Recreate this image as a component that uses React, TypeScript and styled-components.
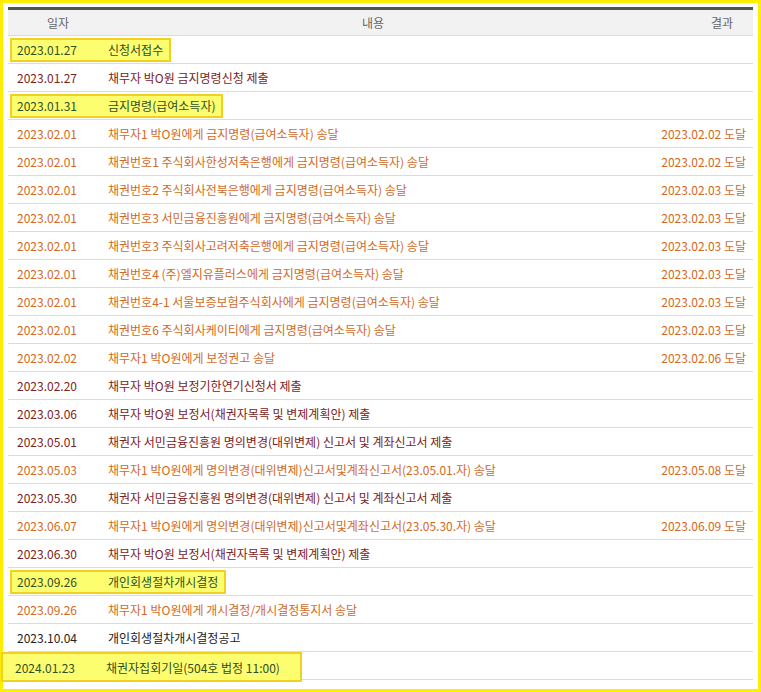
import React from 'react';
import styled, { createGlobalStyle, css } from 'styled-components';

const Global = createGlobalStyle`
  html, body { margin: 0; padding: 0; background: #fff; }
  body { font-family: "Noto Sans CJK KR", "Noto Sans", sans-serif; }
`;

type Tone = 'key' | 'debtor' | 'send' | 'plain';

interface Row {
  date: string;
  text: string;
  result?: string;
  tone: Tone;
  wide?: boolean;
}

const rows: Row[] = [
  { date: '2023.01.27', text: '신청서접수', tone: 'key' },
  { date: '2023.01.27', text: '채무자 박O원 금지명령신청 제출', tone: 'debtor' },
  { date: '2023.01.31', text: '금지명령(급여소득자)', tone: 'key' },
  { date: '2023.02.01', text: '채무자1 박O원에게 금지명령(급여소득자) 송달', result: '2023.02.02 도달', tone: 'send' },
  { date: '2023.02.01', text: '채권번호1 주식회사한성저축은행에게 금지명령(급여소득자) 송달', result: '2023.02.02 도달', tone: 'send' },
  { date: '2023.02.01', text: '채권번호2 주식회사전북은행에게 금지명령(급여소득자) 송달', result: '2023.02.03 도달', tone: 'send' },
  { date: '2023.02.01', text: '채권번호3 서민금융진흥원에게 금지명령(급여소득자) 송달', result: '2023.02.03 도달', tone: 'send' },
  { date: '2023.02.01', text: '채권번호3 주식회사고려저축은행에게 금지명령(급여소득자) 송달', result: '2023.02.03 도달', tone: 'send' },
  { date: '2023.02.01', text: '채권번호4 (주)엘지유플러스에게 금지명령(급여소득자) 송달', result: '2023.02.03 도달', tone: 'send' },
  { date: '2023.02.01', text: '채권번호4-1 서울보증보험주식회사에게 금지명령(급여소득자) 송달', result: '2023.02.03 도달', tone: 'send' },
  { date: '2023.02.01', text: '채권번호6 주식회사케이티에게 금지명령(급여소득자) 송달', result: '2023.02.03 도달', tone: 'send' },
  { date: '2023.02.02', text: '채무자1 박O원에게 보정권고 송달', result: '2023.02.06 도달', tone: 'send' },
  { date: '2023.02.20', text: '채무자 박O원 보정기한연기신청서 제출', tone: 'debtor' },
  { date: '2023.03.06', text: '채무자 박O원 보정서(채권자목록 및 변제계획안) 제출', tone: 'debtor' },
  { date: '2023.05.01', text: '채권자 서민금융진흥원 명의변경(대위변제) 신고서 및 계좌신고서 제출', tone: 'debtor' },
  { date: '2023.05.03', text: '채무자1 박O원에게 명의변경(대위변제)신고서및계좌신고서(23.05.01.자) 송달', result: '2023.05.08 도달', tone: 'send' },
  { date: '2023.05.30', text: '채권자 서민금융진흥원 명의변경(대위변제) 신고서 및 계좌신고서 제출', tone: 'debtor' },
  { date: '2023.06.07', text: '채무자1 박O원에게 명의변경(대위변제)신고서및계좌신고서(23.05.30.자) 송달', result: '2023.06.09 도달', tone: 'send' },
  { date: '2023.06.30', text: '채무자 박O원 보정서(채권자목록 및 변제계획안) 제출', tone: 'debtor' },
  { date: '2023.09.26', text: '개인회생절차개시결정', tone: 'key' },
  { date: '2023.09.26', text: '채무자1 박O원에게 개시결정/개시결정통지서 송달', tone: 'send' },
  { date: '2023.10.04', text: '개인회생절차개시결정공고', tone: 'plain' },
  { date: '2024.01.23', text: '채권자집회기일(504호 법정 11:00)', tone: 'key', wide: true },
];

const toneColor: Record<Tone, string> = {
  key: '#2f4f1f',
  debtor: '#7b2222',
  send: '#d2691e',
  plain: '#222',
};

const Frame = styled.div`
  height: 692px;
  box-sizing: border-box;
  border: 3px solid #ffee00;
  padding: 4px 5px 0 5px;
`;

const Table = styled.div`
  border-top: 3px solid #555;
  font-size: 12px;
`;

const Line = styled.div<{ $head?: boolean }>`
  display: grid;
  grid-template-columns: 100px 1fr 115px;
  height: 28px;
  box-sizing: border-box;
  border-bottom: 1px solid #dcdcdc;
  align-items: center;
  ${(p) =>
    p.$head &&
    css`
      background: #f2f2f2;
      color: #666;
      height: 26px;
      text-align: center;
    `}
`;

const Cell = styled.div<{ $tone: Tone }>`
  color: ${(p) => toneColor[p.$tone]};
  white-space: nowrap;
  padding-left: 9px;
`;

const HeadCell = styled.div<{ $right?: boolean }>`
  ${(p) => p.$right && 'padding-right: 20px; text-align: right;'}
`;

const Mark = styled.div<{ $wide?: boolean }>`
  grid-column: 1 / 3;
  justify-self: start;
  display: grid;
  grid-template-columns: 91px auto;
  align-items: center;
  background: #fdfd70;
  border: 2px solid #f0d020;
  box-sizing: border-box;
  height: ${(p) => (p.$wide ? '30px' : '24px')};
  margin-left: ${(p) => (p.$wide ? '-7px' : '2px')};
  padding: ${(p) => (p.$wide ? '0 20px 0 12px' : '0 6px 0 5px')};
  color: ${toneColor.key};
  white-space: nowrap;
`;

const Result = styled.div`
  color: ${toneColor.send};
  text-align: right;
  padding-right: 7px;
  white-space: nowrap;
`;

export default function App() {
  return (
    <>
      <Global />
      <Frame>
        <Table>
          <Line $head>
            <HeadCell>일자</HeadCell>
            <HeadCell>내용</HeadCell>
            <HeadCell $right>결과</HeadCell>
          </Line>
          {rows.map((r, i) => (
            <Line key={i}>
              {r.tone === 'key' ? (
                <Mark $wide={r.wide}>
                  <span>{r.date}</span>
                  <span>{r.text}</span>
                </Mark>
              ) : (
                <>
                  <Cell $tone={r.tone}>{r.date}</Cell>
                  <Cell $tone={r.tone} style={{ paddingLeft: 0 }}>{r.text}</Cell>
                </>
              )}
              <Result>{r.result ?? ''}</Result>
            </Line>
          ))}
        </Table>
      </Frame>
    </>
  );
}
